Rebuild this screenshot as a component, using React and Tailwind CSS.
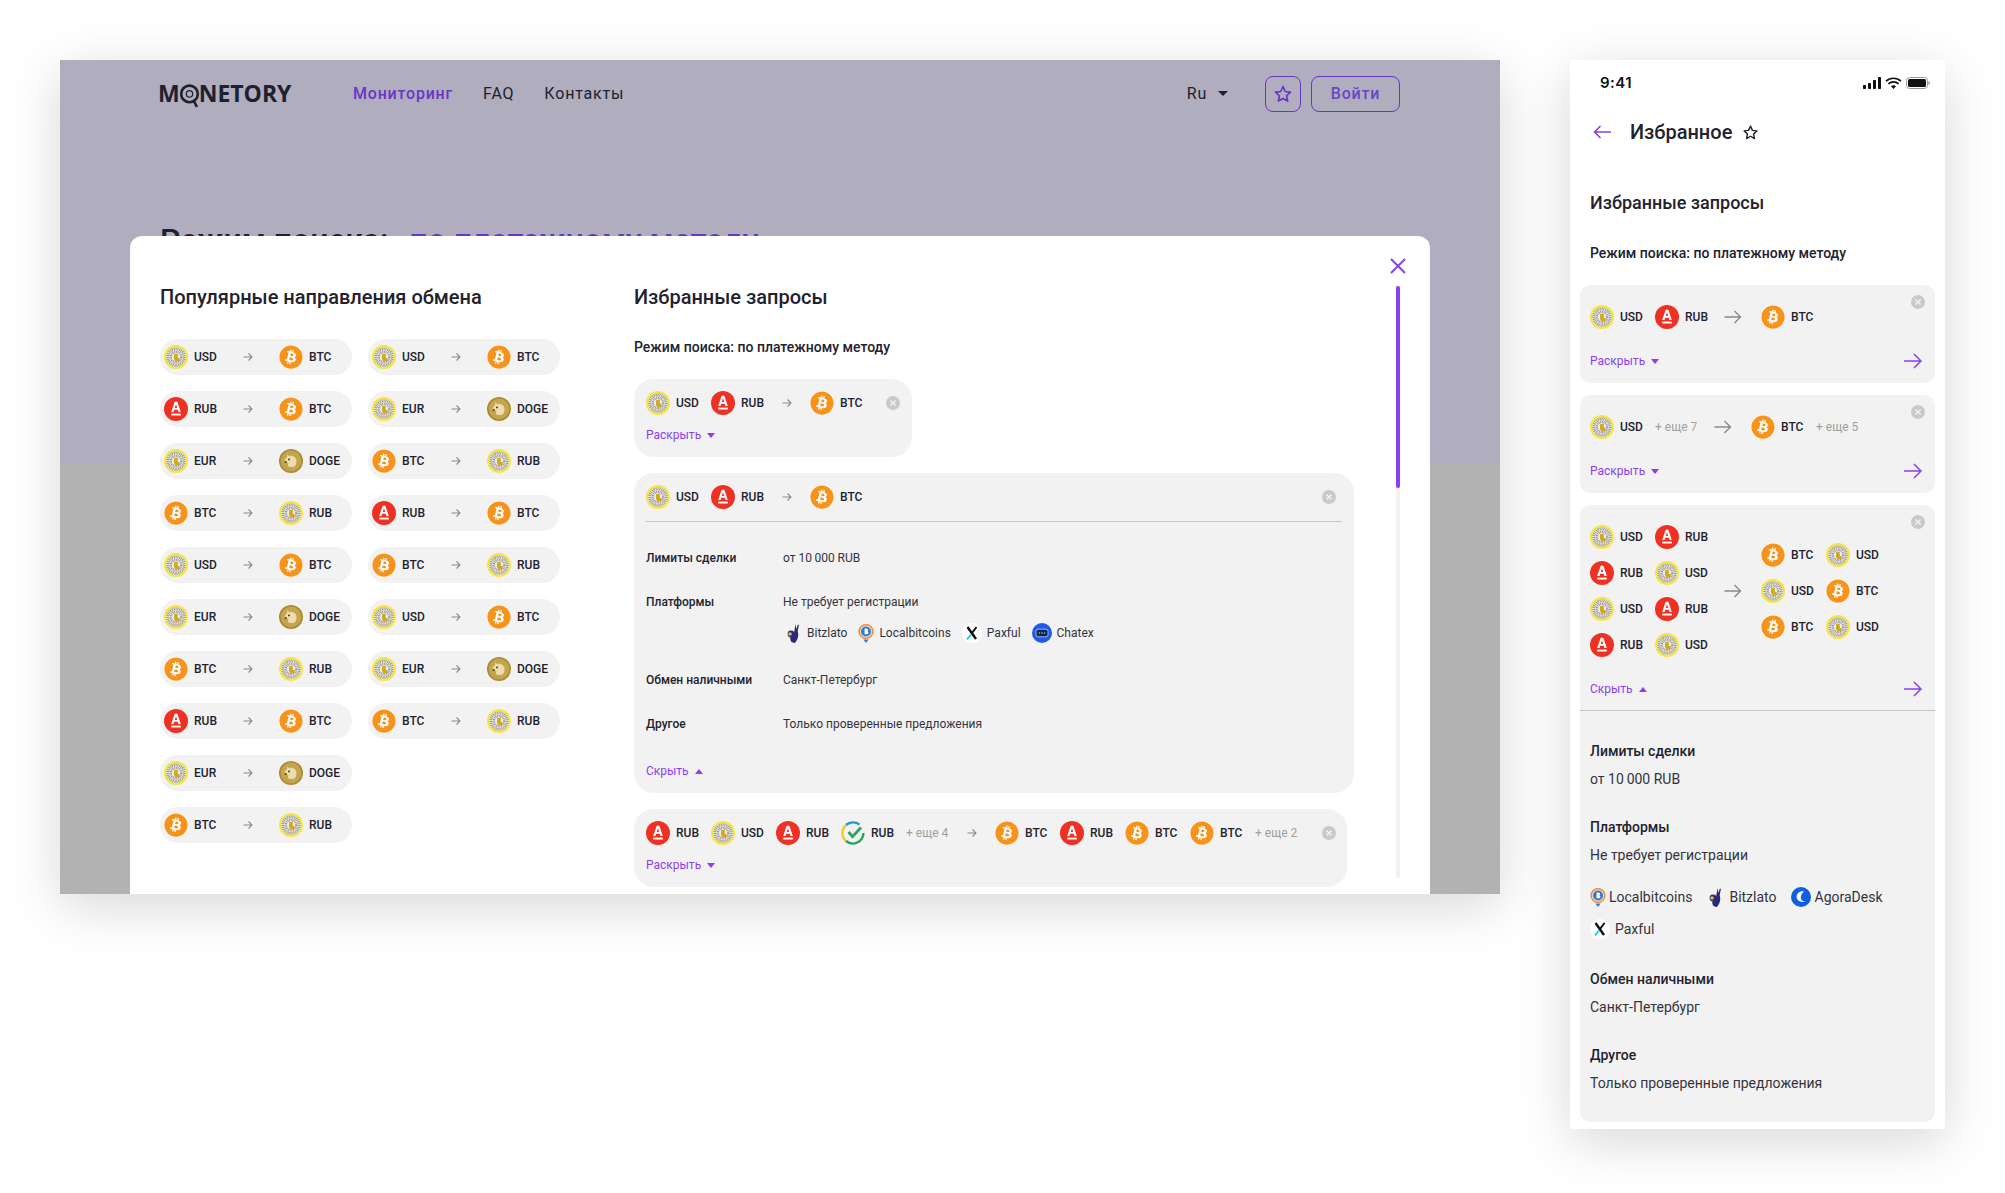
import { FaBitcoin } from "react-icons/fa"

const leftPairs = [
  ["USD", "BTC"],
  ["RUB", "BTC"],
  ["EUR", "DOGE"],
  ["BTC", "RUB"],
  ["USD", "BTC"],
  ["EUR", "DOGE"],
  ["BTC", "RUB"],
  ["RUB", "BTC"],
  ["EUR", "DOGE"],
  ["BTC", "RUB"],
]

const rightPairs = [
  ["USD", "BTC"],
  ["EUR", "DOGE"],
  ["BTC", "RUB"],
  ["RUB", "BTC"],
  ["BTC", "RUB"],
  ["USD", "BTC"],
  ["EUR", "DOGE"],
  ["BTC", "RUB"],
]

const TinkIcon = () => (
  <svg viewBox="0 0 24 24" className="w-6 h-6 shrink-0">
    <circle cx="12" cy="12" r="12" fill="#f8e43e" />
    <circle cx="12" cy="12" r="10" fill="#e6e5de" />
    <circle cx="12" cy="12" r="8.2" fill="none" stroke="#94948c" strokeWidth="3" strokeDasharray="0.9 1" />
    <circle cx="12" cy="12" r="5.2" fill="none" stroke="#8a8a82" strokeWidth="2" strokeDasharray="0.8 0.9" />
    <circle cx="12" cy="12" r="3.6" fill="#f1efe2" />
    <path d="M10.2 8.8h3.6v4l1.8 0.4v2.8h-4.6l-1.2-2.4z" fill="#cfa92b" />
  </svg>
)

const AlfaIcon = () => (
  <svg viewBox="0 0 24 24" className="w-6 h-6 shrink-0">
    <circle cx="12" cy="12" r="12" fill="#ef3124" />
    <path
      fillRule="evenodd"
      d="M7.2 15L10.5 5.2Q12 3.9 13.5 5.2L16.8 15H14.5L13.8 12.8H10.2L9.5 15ZM10.8 11H13.2L12 7.2Z"
      fill="#fff"
    />
    <rect x="7.2" y="16.6" width="9.6" height="1.9" fill="#fff" />
  </svg>
)

const BtcIcon = () => (
  <span className="w-6 h-6 shrink-0 rounded-full bg-white flex items-center justify-center">
    <FaBitcoin className="w-6 h-6 text-[#f7931a]" />
  </span>
)

const DogeIcon = () => (
  <svg viewBox="0 0 24 24" className="w-6 h-6 shrink-0">
    <circle cx="12" cy="12" r="12" fill="#a98a34" />
    <circle cx="12" cy="12" r="10.4" fill="#c4a54c" />
    <path d="M8 5.5l2.2 1.4c3-.8 6 .6 7 3.4.8 2.4.2 5.4-1.6 7.2-2.6 1-5.4.6-6.8-.6l.6-3.2c-1.6 0-3.2-.6-3.6-1.8-.2-1.4 1-3 2.4-3.8z" fill="#ecdcae" />
    <circle cx="10" cy="10.4" r="0.9" fill="#3b2c10" />
    <circle cx="6.8" cy="13" r="0.9" fill="#3b2c10" />
  </svg>
)

const CheckIcon = () => (
  <svg viewBox="0 0 24 24" className="w-6 h-6 shrink-0" fill="none">
    <path d="M18.5 3.6A10.6 10.6 0 0 0 5 4" stroke="#1e9ad6" strokeWidth="2.4" />
    <path d="M5 4A10.6 10.6 0 0 0 5 20" stroke="#f2c928" strokeWidth="2.4" />
    <path d="M5 20A10.6 10.6 0 0 0 22.4 12" stroke="#26a65b" strokeWidth="2.4" />
    <path d="M7.5 11l4 4.6L20 6.5" stroke="#26a65b" strokeWidth="2.8" />
  </svg>
)

const fromIcons = { USD: TinkIcon, EUR: TinkIcon, RUB: AlfaIcon, BTC: BtcIcon, DOGE: DogeIcon }
// the RUB on the receiving side is the yellow bank, not the red one
const toIcons = { USD: TinkIcon, EUR: TinkIcon, RUB: TinkIcon, BTC: BtcIcon, DOGE: DogeIcon }

const BitzlatoIcon = () => (
  <svg viewBox="0 0 16 20" className="w-4 h-5 shrink-0">
    <path d="M9.5 1l.8 5 1.6-4.4 1 .4-1.2 6.2c1 2.4.6 6-.6 8.6L9 20c-1.6 0-3-.6-4-1.4l-1-3.6 3.6-2.4z" fill="#2a2a78" />
    <circle cx="5" cy="11" r="3.4" fill="#2a2a78" />
    <circle cx="4" cy="11" r="1.8" fill="#f2b632" />
  </svg>
)

const LocalIcon = () => (
  <svg viewBox="0 0 16 20" className="w-4 h-5 shrink-0">
    <path d="M8 20l-2.6-3.6h5.2z" fill="#2f7fd0" />
    <circle cx="8" cy="8.5" r="7.6" fill="#e8843c" />
    <circle cx="8" cy="8.5" r="6.2" fill="#f6d9bd" />
    <circle cx="8" cy="8.5" r="5" fill="#2f7fd0" />
    <path d="M6.6 5.6h2.2c1.6 0 1.6 2.4.4 2.7 1.6.3 1.6 3-.4 3H6.6z" fill="#fff" />
  </svg>
)

const PaxfulIcon = () => (
  <svg viewBox="0 0 20 20" className="w-5 h-5 shrink-0" fill="none">
    <circle cx="10" cy="10" r="10" fill="#fff" />
    <path d="M5.5 4l8.5 12" stroke="#111" strokeWidth="2.4" />
    <path d="M14.5 4L10 10" stroke="#111" strokeWidth="2" />
    <path d="M9 11.5L5 16.5" stroke="#2fc6dc" strokeWidth="2" />
  </svg>
)

const ChatexIcon = () => (
  <svg viewBox="0 0 20 20" className="w-5 h-5 shrink-0">
    <circle cx="10" cy="10" r="10" fill="#1f5be8" />
    <rect x="4" y="6.2" width="12" height="7.6" rx="2" fill="#12264f" stroke="#bcd2ff" strokeWidth="0.8" />
    <circle cx="7.4" cy="10" r="0.8" fill="#5fe0e8" />
    <circle cx="10" cy="10" r="0.8" fill="#5fe0e8" />
    <circle cx="12.6" cy="10" r="0.8" fill="#5fe0e8" />
  </svg>
)

const AgoraIcon = () => (
  <svg viewBox="0 0 20 20" className="w-5 h-5 shrink-0">
    <circle cx="10" cy="10" r="10" fill="#0f5fe0" />
    <path d="M13 4.5c-4.2-.8-7.6 2-7.4 5.6.2 3.4 3.6 5.8 8.4 4.6-3-1-4.6-2.4-4.2-4.8.2-2 1.4-3.6 3.2-5.4z" fill="#fff" />
  </svg>
)

const SmallArrow = () => (
  <svg viewBox="0 0 10 10" className="w-2.5 h-2.5 shrink-0" fill="none" stroke="#8a8a8a" strokeWidth="1.1">
    <path d="M0.5 5h8.5M5.5 1.5L9 5l-3.5 3.5" />
  </svg>
)

const MobileArrow = ({ className = "" }) => (
  <svg viewBox="0 0 18 14" className={`w-[18px] h-[14px] shrink-0 ${className}`} fill="none" stroke="#8a8a8a" strokeWidth="1.4">
    <path d="M0.5 7h16M10.5 1l6 6-6 6" />
  </svg>
)

const GoArrow = () => (
  <svg viewBox="0 0 18 16" className="w-[18px] h-4 shrink-0" fill="none" stroke="#8a3ff0" strokeWidth="1.5">
    <path d="M0 8h17M10 1l7 7-7 7" />
  </svg>
)

const CloseDot = () => (
  <svg viewBox="0 0 14 14" className="w-3.5 h-3.5 shrink-0" fill="none" stroke="#f2f2f2" strokeWidth="1.4">
    <circle cx="7" cy="7" r="7" fill="#c9c9c9" stroke="none" />
    <path d="M4.4 4.4l5.2 5.2M9.6 4.4l-5.2 5.2" />
  </svg>
)

const Caret = ({ up }) => (
  <svg viewBox="0 0 8 5" className={`w-2 h-[5px] shrink-0 ${up ? "rotate-180" : ""}`}>
    <path d="M0 0h8L4 5z" fill="#8a3ff0" />
  </svg>
)

const StarIcon = ({ className, color, width }) => (
  <svg viewBox="0 0 24 24" className={className} fill="none" stroke={color} strokeWidth={width} strokeLinejoin="round">
    <path d="M12 3l2.7 6 6.3.7-4.7 4.4 1.3 6.4-5.6-3.2-5.6 3.2 1.3-6.4L3 9.7 9.3 9z" />
  </svg>
)

// pill from the left column of the modal
const Pill = ({ from, to }) => {
  const From = fromIcons[from]
  const To = toIcons[to]
  return (
    <div className="w-[192px] h-9 rounded-full bg-[#f2f2f2] flex items-center pl-1 text-xs font-medium text-[#22222e]">
      <div className="w-[79px] flex items-center gap-1.5">
        <From />
        <span>{from}</span>
      </div>
      <SmallArrow />
      <div className="ml-[26px] flex items-center gap-1.5">
        <To />
        <span>{to}</span>
      </div>
    </div>
  )
}

const Token = ({ code, icon: Icon }) => (
  <div className="w-[65px] shrink-0 flex items-center gap-1.5 text-xs font-medium text-[#22222e]">
    <Icon />
    <span>{code}</span>
  </div>
)

const More = ({ n, className = "" }) => (
  <span className={`w-[42px] shrink-0 whitespace-nowrap text-xs text-[#a0a0a0] ${className}`}>+ еще {n}</span>
)

const Toggle = ({ open }) => (
  <div className="flex items-center gap-1.5 text-xs text-[#8a3ff0]">
    <span>{open ? "Скрыть" : "Раскрыть"}</span>
    <Caret up={open} />
  </div>
)

const DetailRow = ({ label, children, className = "" }) => (
  <div className={`flex text-xs leading-4 text-[#33333d] ${className}`}>
    <div className="w-[137px] shrink-0 font-medium text-[#22222e]">{label}</div>
    <div>{children}</div>
  </div>
)

const Platform = ({ icon: Icon, name, className = "gap-[5px]" }) => (
  <div className={`flex items-center ${className}`}>
    <Icon />
    <span>{name}</span>
  </div>
)

const Modal = () => (
  <div className="absolute left-[70px] top-[176px] w-[1300px] h-[658px] bg-white rounded-t-xl flex overflow-hidden">
    <div className="w-[504px] shrink-0 pl-[30px] pt-[48px]">
      <h2 className="text-[20px] leading-[26px] font-medium text-[#22222e]">Популярные направления обмена</h2>
      <div className="mt-[29px] flex gap-4 items-start">
        <div className="flex flex-col gap-4">
          {leftPairs.map((p, i) => (
            <Pill key={i} from={p[0]} to={p[1]} />
          ))}
        </div>
        <div className="flex flex-col gap-4">
          {rightPairs.map((p, i) => (
            <Pill key={i} from={p[0]} to={p[1]} />
          ))}
        </div>
      </div>
    </div>

    <div className="w-[720px] shrink-0 pt-[48px] mr-[42px]">
      <h2 className="text-[20px] leading-[26px] font-medium text-[#22222e]">Избранные запросы</h2>
      <div className="mt-[27px] text-sm leading-[20px] font-medium text-[#22222e]">Режим поиска: по платежному методу</div>

      <div className="mt-[22px] w-[278px] h-[78px] bg-[#f2f2f2] rounded-[20px] pl-3 pt-3">
        <div className="flex items-center">
          <Token code="USD" icon={TinkIcon} />
          <Token code="RUB" icon={AlfaIcon} />
          <div className="ml-1.5 mr-[18px]">
            <SmallArrow />
          </div>
          <Token code="BTC" icon={BtcIcon} />
          <div className="ml-[11px]">
            <CloseDot />
          </div>
        </div>
        <div className="mt-3">
          <Toggle />
        </div>
      </div>

      <div className="mt-4 w-[720px] bg-[#f2f2f2] rounded-[20px] px-3 pt-3 pb-3.5">
        <div className="flex items-center pr-1.5">
          <Token code="USD" icon={TinkIcon} />
          <Token code="RUB" icon={AlfaIcon} />
          <div className="ml-1.5 mr-[18px]">
            <SmallArrow />
          </div>
          <Token code="BTC" icon={BtcIcon} />
          <div className="ml-auto">
            <CloseDot />
          </div>
        </div>
        <div className="mt-3 h-px bg-[#c4c4c4]" />
        <DetailRow label="Лимиты сделки" className="mt-7">
          от 10{"\u2009"}000 RUB
        </DetailRow>
        <DetailRow label="Платформы" className="mt-7">
          Не требует регистрации
          <div className="mt-[13px] flex items-center h-5 ml-[3px] gap-[11px]">
            <Platform icon={BitzlatoIcon} name="Bitzlato" />
            <Platform icon={LocalIcon} name="Localbitcoins" />
            <Platform icon={PaxfulIcon} name="Paxful" />
            <Platform icon={ChatexIcon} name="Chatex" />
          </div>
        </DetailRow>
        <DetailRow label="Обмен наличными" className="mt-[29px]">
          Санкт-Петербург
        </DetailRow>
        <DetailRow label="Другое" className="mt-7">
          Только проверенные предложения
        </DetailRow>
        <div className="mt-[31px]">
          <Toggle open />
        </div>
      </div>

      <div className="mt-4 w-[713px] h-[78px] bg-[#f2f2f2] rounded-[20px] pl-3 pt-3">
        <div className="flex items-center">
          <Token code="RUB" icon={AlfaIcon} />
          <Token code="USD" icon={TinkIcon} />
          <Token code="RUB" icon={AlfaIcon} />
          <Token code="RUB" icon={CheckIcon} />
          <More n={4} />
          <div className="ml-[19px] mr-[18px]">
            <SmallArrow />
          </div>
          <Token code="BTC" icon={BtcIcon} />
          <Token code="RUB" icon={AlfaIcon} />
          <Token code="BTC" icon={BtcIcon} />
          <Token code="BTC" icon={BtcIcon} />
          <More n={2} />
          <div className="ml-[25px]">
            <CloseDot />
          </div>
        </div>
        <div className="mt-3">
          <Toggle />
        </div>
      </div>
    </div>

    <div className="w-[4px] h-[592px] mt-[50px] bg-[#f2f2f2] shrink-0">
      <div className="w-full h-[202px] bg-[#8a3ff0] rounded-full" />
    </div>

    {/* close button */}
    <svg viewBox="0 0 16 16" className="absolute left-[1260px] top-[22px] w-4 h-4" fill="none" stroke="#8a3ff0" strokeWidth="2">
      <path d="M1 1l14 14M15 1L1 15" />
    </svg>
  </div>
)

const Desktop = () => (
  <div className="relative w-[1440px] h-[834px] shrink-0 flex flex-col overflow-hidden shadow-[0_12px_50px_rgba(0,0,0,0.16)]">
    <div className="h-[404px] bg-[#b0adbe] px-[100px]">
      <header className="h-[66px] pt-px flex items-center">
        <div className="w-[193px] -ml-0.5 mr-0.5 flex items-center font-['Open_Sans',sans-serif] text-[23px] font-bold text-[#20202e] leading-none">
          <span>M</span>
          <svg viewBox="0 0 24 28" className="w-[21px] h-[25px] mt-[5px] -mx-px shrink-0" fill="none" stroke="#20202e">
            <circle cx="12" cy="11" r="9.5" strokeWidth="3" />
            <circle cx="12" cy="11" r="3.6" strokeWidth="1.4" />
            <path d="M17 19l3.5 7" strokeWidth="3" />
          </svg>
          <span>NETORY</span>
        </div>
        <nav className="flex items-center text-base font-medium tracking-[0.05em]">
          <span className="text-[#6a35c4]">Мониторинг</span>
          <span className="ml-[30px] font-normal text-[#20202e]">FAQ</span>
          <span className="ml-[30px] font-normal text-[#20202e]">Контакты</span>
        </nav>
        <div className="ml-auto flex items-center text-base tracking-[0.05em] text-[#20202e]">
          <span>Ru</span>
          <svg viewBox="0 0 10 5" className="ml-[11px] w-2.5 h-[5px]">
            <path d="M0 0h10L5 5z" fill="#20202e" />
          </svg>
          <div className="ml-[37px] w-9 h-9 rounded-lg border border-[#6a35c4] flex items-center justify-center">
            <StarIcon className="w-5 h-5" color="#6a35c4" width="2" />
          </div>
          <div className="ml-2.5 w-[89px] h-9 rounded-lg border border-[#6a35c4] flex items-center justify-center font-medium text-[#6a45c4]">
            Войти
          </div>
        </div>
      </header>
      <h1 className="mt-[92px] text-[32px] leading-[44px] font-medium text-[#20202e] whitespace-nowrap">
        Режим поиска: <span className="ml-[13px] text-[#6a35c4]">по платежному методу</span>
      </h1>
    </div>
    <div className="flex-1 bg-[#b2b2b2]" />
    <Modal />
  </div>
)

const MobileDetail = ({ label, value, className = "" }) => (
  <div className={className}>
    <div className="text-sm leading-5 font-medium text-[#22222e]">{label}</div>
    <div className="mt-2 text-sm leading-5 text-[#33333d]">{value}</div>
  </div>
)

const MobileCard = ({ children }) => (
  <div className="relative w-[355px] ml-[10px] bg-[#f2f2f2] rounded-[10px]">
    <div className="absolute right-[10px] top-[10px]">
      <CloseDot />
    </div>
    {children}
  </div>
)

const Mobile = () => (
  <div className="w-[375px] h-[1069px] shrink-0 bg-white shadow-[0_12px_50px_rgba(0,0,0,0.16)]">
    <div className="h-[46px] pl-[30px] pr-[15px] flex items-center justify-between">
      <span className="font-['Inter',sans-serif] text-[15px] font-semibold tracking-[0.03em] text-[#111]">9:41</span>
      <svg viewBox="0 0 67 12" className="w-[67px] h-3">
        <rect x="0" y="8" width="3" height="4" rx="0.7" fill="#111" />
        <rect x="5" y="6" width="3" height="6" rx="0.7" fill="#111" />
        <rect x="10" y="3" width="3" height="9" rx="0.7" fill="#111" />
        <rect x="15" y="0" width="3" height="12" rx="0.7" fill="#111" />
        <path d="M23 4.2a11 11 0 0 1 15 0M25.4 6.8a7.6 7.6 0 0 1 10.2 0" fill="none" stroke="#111" strokeWidth="1.7" />
        <path d="M28 9.3a4 4 0 0 1 5 0L30.5 12z" fill="#111" />
        <rect x="43.5" y="0.5" width="21" height="11" rx="3" fill="none" stroke="#999" />
        <rect x="45" y="2" width="18" height="8" rx="1.6" fill="#111" />
        <path d="M65.5 4v4c.9-.3 1.5-1 1.5-2s-.6-1.7-1.5-2z" fill="#999" />
      </svg>
    </div>
    <div className="h-[52px] pl-[23px] flex items-center">
      <svg viewBox="0 0 18 14" className="w-[18px] h-[14px]" fill="none" stroke="#8a3ff0" strokeWidth="1.6">
        <path d="M18 7H1.5M7.5 1l-6 6 6 6" />
      </svg>
      <span className="ml-[19px] text-[20px] font-medium text-[#22222e]">Избранное</span>
      <StarIcon className="ml-[10px] w-[17px] h-[17px]" color="#22222e" width="2" />
    </div>
    <h2 className="mt-[31px] ml-5 text-[18px] leading-7 font-medium text-[#22222e]">Избранные запросы</h2>
    <div className="mt-[26px] ml-5 text-sm leading-5 font-medium text-[#22222e]">Режим поиска: по платежному методу</div>

    <div className="mt-[22px] flex flex-col gap-3">
      <MobileCard>
        <div className="pl-[10px] pt-5 pr-[13px] pb-[13px]">
          <div className="flex items-center">
            <Token code="USD" icon={TinkIcon} />
            <Token code="RUB" icon={AlfaIcon} />
            <MobileArrow className="ml-1 mr-[19px]" />
            <Token code="BTC" icon={BtcIcon} />
          </div>
          <div className="mt-[23px] h-[18px] flex items-center justify-between">
            <Toggle />
            <GoArrow />
          </div>
        </div>
      </MobileCard>

      <MobileCard>
        <div className="pl-[10px] pt-5 pr-[13px] pb-[13px]">
          <div className="flex items-center">
            <Token code="USD" icon={TinkIcon} />
            <More n={7} />
            <MobileArrow className="ml-[17px] mr-[19px]" />
            <Token code="BTC" icon={BtcIcon} />
            <More n={5} />
          </div>
          <div className="mt-[23px] h-[18px] flex items-center justify-between">
            <Toggle />
            <GoArrow />
          </div>
        </div>
      </MobileCard>

      <MobileCard>
        <div className="px-[10px] pt-5 pr-[13px] pb-3">
          <div className="flex items-center">
            <div className="grid grid-cols-2 gap-y-3">
              <Token code="USD" icon={TinkIcon} />
              <Token code="RUB" icon={AlfaIcon} />
              <Token code="RUB" icon={AlfaIcon} />
              <Token code="USD" icon={TinkIcon} />
              <Token code="USD" icon={TinkIcon} />
              <Token code="RUB" icon={AlfaIcon} />
              <Token code="RUB" icon={AlfaIcon} />
              <Token code="USD" icon={TinkIcon} />
            </div>
            <MobileArrow className="ml-1 mr-[19px]" />
            <div className="grid grid-cols-2 gap-y-3">
              <Token code="BTC" icon={BtcIcon} />
              <Token code="USD" icon={TinkIcon} />
              <Token code="USD" icon={TinkIcon} />
              <Token code="BTC" icon={BtcIcon} />
              <Token code="BTC" icon={BtcIcon} />
              <Token code="USD" icon={TinkIcon} />
            </div>
          </div>
          <div className="mt-[23px] h-[18px] flex items-center justify-between">
            <Toggle open />
            <GoArrow />
          </div>
        </div>
        <div className="h-px bg-[#c4c4c4]" />
        <div className="pl-[10px] pr-3 pt-[30px] pb-[29px]">
          <MobileDetail label="Лимиты сделки" value={"от 10\u2009000 RUB"} />
          <MobileDetail label="Платформы" value="Не требует регистрации" className="mt-7" />
          <div className="mt-[22px] flex flex-wrap gap-y-3 text-sm leading-5 text-[#33333d]">
            <Platform icon={LocalIcon} name="Localbitcoins" className="gap-[3px] mr-[16px]" />
            <Platform icon={BitzlatoIcon} name="Bitzlato" className="gap-[5px] mr-[14px]" />
            <Platform icon={AgoraIcon} name="AgoraDesk" className="gap-1" />
            <Platform icon={PaxfulIcon} name="Paxful" className="gap-[5px] w-full" />
          </div>
          <MobileDetail label="Обмен наличными" value="Санкт-Петербург" className="mt-[30px]" />
          <MobileDetail label="Другое" value="Только проверенные предложения" className="mt-7" />
        </div>
      </MobileCard>
    </div>
  </div>
)

export default function App() {
  return (
    <div className="w-[2005px] h-[1193px] bg-white overflow-hidden flex items-start gap-[70px] pl-[60px] pt-[60px] font-['Roboto',sans-serif]">
      <Desktop />
      <Mobile />
    </div>
  )
}
